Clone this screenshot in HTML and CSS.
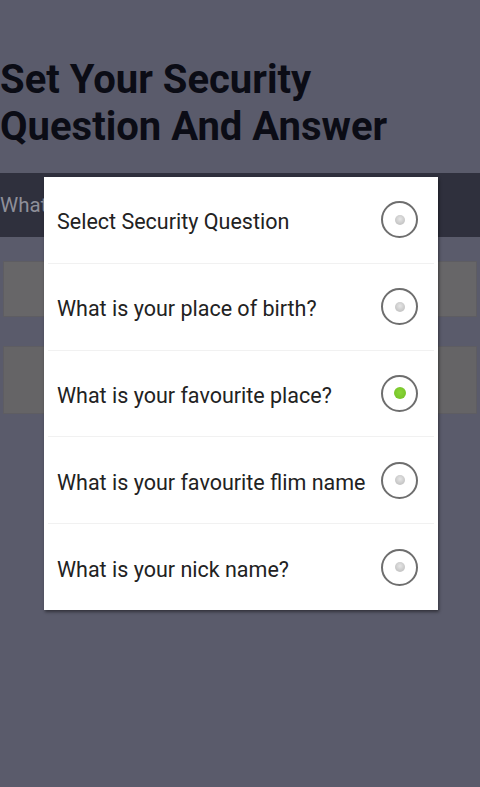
FILE: index.html
```html
<!DOCTYPE html>
<html>
<head>
<meta charset="utf-8">
<link rel="stylesheet" href="styles.css">
</head>
<body>
<div class="page">
  <h1 class="title">Set Your Security<br>Question And Answer</h1>
  <div class="strip"><span class="strip-text">What is your favourite place?</span></div>
  <div class="field field-a"></div>
  <div class="field field-b"></div>
</div>
<div class="dialog">
  <div class="row"><span class="label">Select Security Question</span><span class="radio"><span class="dot"></span></span></div>
  <div class="row"><span class="label">What is your place of birth?</span><span class="radio"><span class="dot"></span></span></div>
  <div class="row"><span class="label">What is your favourite place?</span><span class="radio checked"><span class="dot"></span></span></div>
  <div class="row"><span class="label">What is your favourite flim name</span><span class="radio"><span class="dot"></span></span></div>
  <div class="row last"><span class="label">What is your nick name?</span><span class="radio"><span class="dot"></span></span></div>
</div>
</body>
</html>
```
FILE: styles.css
```css
html, body {
  margin: 0;
  padding: 0;
  width: 480px;
  height: 787px;
  overflow: hidden;
  background: #5a5b6b;
  font-family: Roboto, "Liberation Sans", sans-serif;
}
.page {
  display: flex;
  flex-direction: column;
  padding-top: 56px;
}
.title {
  margin: 0;
  padding-left: 0;
  font-size: 40px;
  line-height: 47px;
  font-weight: 700;
  color: #0b0c15;
}
.strip {
  margin-top: 23px;
  height: 64px;
  background: #2f303d;
  display: flex;
  align-items: center;
  overflow: hidden;
  white-space: nowrap;
}
.strip-text {
  display: block;
  width: 44px;
  overflow: hidden;
  font-size: 20.5px;
  color: #8e8f99;
  margin-top: 0;
}
.field {
  margin: 0 3px;
  background: #676668;
  border: 1px solid #5e5d62;
}
.field-a {
  margin-top: 24px;
  height: 54px;
}
.field-b {
  margin-top: 29px;
  height: 66px;
  background: #656466;
}
.dialog {
  position: absolute;
  left: 44px;
  top: 177px;
  width: 394px;
  height: 433px;
  background: #ffffff;
  box-shadow: 1px 2px 3px rgba(0,0,0,0.45);
  display: flex;
  flex-direction: column;
}
.row {
  flex: 1;
  display: flex;
  align-items: center;
  justify-content: space-between;
  padding: 0 16px 0 9px;
  margin: 0 4px;
  border-bottom: 1px solid #f1f1f1;
}
.row.last {
  border-bottom: none;
}
.label {
  font-size: 21.5px;
  color: #222222;
  margin-top: 4px;
  white-space: nowrap;
}
.radio {
  width: 33px;
  height: 33px;
  border: 2px solid #6e6e6e;
  border-radius: 50%;
  display: flex;
  align-items: center;
  justify-content: center;
  margin-top: 0;
  flex-shrink: 0;
}
.dot {
  width: 10px;
  height: 10px;
  border-radius: 50%;
  background: radial-gradient(circle at 50% 40%, #e6e6e6 0%, #c9c9c9 60%, #bdbdbd 100%);
}
.radio.checked .dot {
  width: 12px;
  height: 12px;
  background: radial-gradient(circle at 50% 45%, #8ad638 0%, #78c52a 70%, #6db823 100%);
}
```
